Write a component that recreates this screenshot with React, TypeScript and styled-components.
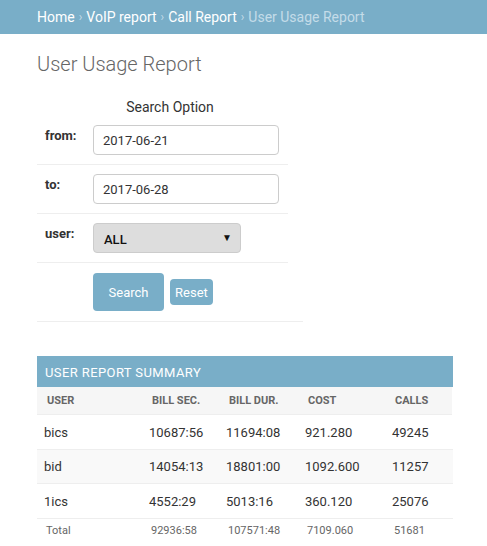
import React from "react";
import styled, { createGlobalStyle } from "styled-components";

const Global = createGlobalStyle`
  html, body { margin: 0; padding: 0; background: #fff; }
  body { font-family: Roboto, "Liberation Sans", Arial, sans-serif; color: #333; }
  * { box-sizing: border-box; }
`;

const Breadcrumbs = styled.div`
  background: #79aec8;
  height: 34px;
  padding: 0 37px;
  display: flex;
  align-items: center;
  font-size: 14px;
  color: #fff;
  white-space: nowrap;
`;

const Crumb = styled.span<{ $current?: boolean }>`
  color: ${(p) => (p.$current ? "#c4dce8" : "#fff")};
`;

const Sep = styled.span`
  color: #c4dce8;
  margin: 0 4px;
  font-size: 12px;
`;

const Content = styled.div`
  padding: 16px 37px 0 37px;
`;

const Title = styled.h1`
  margin: 0;
  font-weight: 300;
  font-size: 20px;
  color: #666;
  line-height: 28px;
`;

const SearchForm = styled.div`
  margin-top: 20px;
  width: 266px;
`;

const Caption = styled.div`
  width: 266px;
  text-align: center;
  font-size: 14px;
  color: #333;
  line-height: 18px;
`;

const FormRow = styled.div<{ $wide?: boolean }>`
  display: grid;
  grid-template-columns: 56px 1fr;
  align-items: start;
  width: ${(p) => (p.$wide ? "266px" : "251px")};
  border-bottom: 1px solid #eee;
  padding: ${(p) => (p.$wide ? "10px 0 10px" : "9px 0 9px")};
`;

const Label = styled.label`
  font-weight: 700;
  font-size: 13px;
  color: #333;
  padding-left: 8px;
  padding-top: 3px;
`;

const TextInput = styled.input`
  width: 186px;
  height: 30px;
  border: 1px solid #ccc;
  border-radius: 4px;
  padding: 0 9px;
  font-family: Roboto, "Liberation Sans", Arial, sans-serif;
  font-size: 13px;
  color: #333;
  background: #fff;
  margin: 0;
`;

const SelectBox = styled.div`
  width: 148px;
  height: 30px;
  border: 1px solid #ccc;
  border-radius: 4px;
  background: #ddd;
  display: flex;
  align-items: center;
  justify-content: space-between;
  padding: 2px 8px 0 10px;
  font-size: 13px;
  font-weight: 500;
  color: #111;
`;

const Arrow = styled.span`
  font-size: 10px;
  color: #111;
  margin-top: -4px;
`;

const Buttons = styled.div`
  display: flex;
  align-items: center;
  gap: 6px;
`;

const Button = styled.button<{ $big?: boolean }>`
  background: #79aec8;
  color: #fff;
  border: none;
  border-radius: 4px;
  font-family: Roboto, "Liberation Sans", Arial, sans-serif;
  font-size: 13px;
  height: ${(p) => (p.$big ? "38px" : "26px")};
  padding: ${(p) => (p.$big ? "0 15px" : "0 5px")};
  width: ${(p) => (p.$big ? "71px" : "43px")};
  cursor: pointer;
`;

const Module = styled.div`
  margin-top: 34px;
  width: 416px;
`;

const ModuleCaption = styled.div`
  background: #79aec8;
  color: #fff;
  height: 31px;
  display: flex;
  align-items: center;
  padding: 1px 8px 0;
  font-size: 13px;
  letter-spacing: 0.4px;
`;

const Row = styled.div<{ $variant: "head" | "odd" | "even" | "total" }>`
  display: grid;
  grid-template-columns: 105px 77px 79px 87px 68px;
  align-items: ${(p) => (p.$variant === "total" ? "start" : "center")};
  padding-top: ${(p) => (p.$variant === "total" ? "5px" : "0")};
  height: ${(p) =>
    p.$variant === "head" ? "28px" : p.$variant === "odd" ? "35px" : p.$variant === "total" ? "29px" : "34px"};
  background: ${(p) =>
    p.$variant === "head" ? "#f6f6f6" : p.$variant === "even" ? "#f9f9f9" : "#fff"};
  border-bottom: ${(p) => (p.$variant === "total" ? "none" : "1px solid #eee")};
  width: ${(p) => (p.$variant === "head" ? "415px" : "416px")};
  font-size: ${(p) => (p.$variant === "head" ? "11px" : p.$variant === "total" ? "11px" : "13px")};
  font-weight: ${(p) => (p.$variant === "head" ? 700 : 400)};
  color: ${(p) => (p.$variant === "head" || p.$variant === "total" ? "#666" : "#333")};
`;

const Cell = styled.div<{ $shift: number }>`
  padding-left: ${(p) => 7 + p.$shift}px;
  white-space: nowrap;
`;

const rows = [
  ["bics", "10687:56", "11694:08", "921.280", "49245"],
  ["bid", "14054:13", "18801:00", "1092.600", "11257"],
  ["1ics", "4552:29", "5013:16", "360.120", "25076"],
];

export default function App() {
  return (
    <>
      <Global />
      <Breadcrumbs>
        <Crumb>Home</Crumb>
        <Sep>›</Sep>
        <Crumb>VoIP report</Crumb>
        <Sep>›</Sep>
        <Crumb>Call Report</Crumb>
        <Sep>›</Sep>
        <Crumb $current>User Usage Report</Crumb>
      </Breadcrumbs>
      <Content>
        <Title>User Usage Report</Title>
        <SearchForm>
          <Caption>Search Option</Caption>
          <FormRow>
            <Label>from:</Label>
            <TextInput defaultValue="2017-06-21" />
          </FormRow>
          <FormRow>
            <Label>to:</Label>
            <TextInput defaultValue="2017-06-28" />
          </FormRow>
          <FormRow>
            <Label>user:</Label>
            <SelectBox>
              <span>ALL</span>
              <Arrow>▼</Arrow>
            </SelectBox>
          </FormRow>
          <FormRow $wide>
            <span />
            <Buttons>
              <Button $big>Search</Button>
              <Button>Reset</Button>
            </Buttons>
          </FormRow>
        </SearchForm>
        <Module>
          <ModuleCaption>USER REPORT SUMMARY</ModuleCaption>
          <Row $variant="head">
            {["USER", "BILL SEC.", "BILL DUR.", "COST", "CALLS"].map((h) => (
              <Cell key={h} $shift={3}>{h}</Cell>
            ))}
          </Row>
          {rows.map((r, i) => (
            <Row key={r[0]} $variant={i % 2 === 0 ? "odd" : "even"}>
              {r.map((c, j) => (
                <Cell key={j} $shift={0}>{c}</Cell>
              ))}
            </Row>
          ))}
          <Row $variant="total">
            {["Total", "92936:58", "107571:48", "7109.060", "51681"].map((c, j) => (
              <Cell key={j} $shift={2}>{c}</Cell>
            ))}
          </Row>
        </Module>
      </Content>
    </>
  );
}
